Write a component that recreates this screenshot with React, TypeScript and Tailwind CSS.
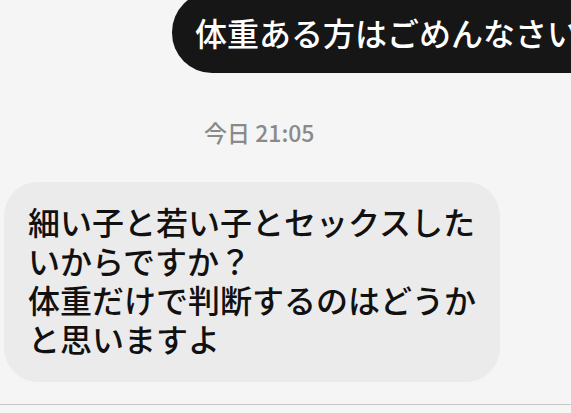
import React from "react";

const jp = { fontFamily: '"Noto Sans CJK JP", "Noto Sans", sans-serif' };

const App: React.FC = () => {
  return (
    <div
      className="w-[571px] h-[413px] overflow-hidden bg-[#f4f5f4] flex flex-col"
      style={jp}
    >
      {/* Sent message (clipped at top and right) */}
      <div className="flex overflow-hidden">
        <div className="ml-[172px] -mt-[8px] shrink-0 whitespace-nowrap rounded-[40px] bg-[#161616] pl-[23px] pr-[40px] pt-[17px] pb-[17px] text-[32px] font-medium leading-[47px] text-white">
          体重ある方はごめんなさい
        </div>
      </div>

      {/* Timestamp */}
      <div className="mt-[44px] pl-[204px] text-[23px] font-medium leading-[30px] text-[#8a8a8a]">
        今日 21:05
      </div>

      {/* Received message */}
      <div className="mt-[35px] ml-[4px] w-[496px] rounded-[34px] bg-[#ebebeb] pl-[24px] pr-[20px] pt-[20px] pb-[24px] text-[32px] font-medium leading-[39px] text-[#111]">
        細い子と若い子とセックスした
        <br />
        いからですか？
        <br />
        体重だけで判断するのはどうか
        <br />
        と思いますよ
      </div>

      {/* Divider */}
      <div className="mt-auto mb-[8px] h-px bg-[#c9c9c9]" />
    </div>
  );
};

export default App;
